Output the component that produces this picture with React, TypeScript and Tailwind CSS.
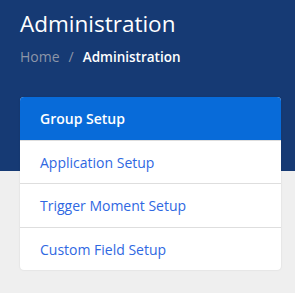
export default function App() {
  const items = [
    { label: 'Application Setup', h: 'h-[43px]' },
    { label: 'Trigger Moment Setup', h: 'h-[44px]' },
    { label: 'Custom Field Setup', h: 'h-[43px]' },
  ]
  return (
    <div className="min-h-screen bg-[#efefef] font-['Open_Sans',sans-serif]">
      <div className="h-[171px] bg-[#163a74] px-5 pt-[9px]">
        <h1 className="text-[22.5px] leading-[30px] text-white">Administration</h1>
        <div className="mt-[9px] flex items-center gap-[9px] text-[14px] leading-[18px]">
          <span className="text-[#8d96a8]">Home</span>
          <span className="text-[#8d96a8]">/</span>
          <span className="text-[13.5px] font-semibold text-white">Administration</span>
        </div>
      </div>
      <div className="ml-5 mr-[14px] -mt-[74px] overflow-hidden rounded-[4px] bg-white shadow-[0_0_2px_rgba(0,0,0,0.12)]">
        <div className="flex h-[43px] items-center bg-[#086bd9] px-5 text-[14px] font-semibold text-white">
          Group Setup
        </div>
        {items.map((item) => (
          <div
            key={item.label}
            className={`flex ${item.h} items-center border-t border-[#dedede] px-5 text-[14px] text-[#2f68e2] first:border-t-0`}
          >
            {item.label}
          </div>
        ))}
      </div>
    </div>
  )
}
